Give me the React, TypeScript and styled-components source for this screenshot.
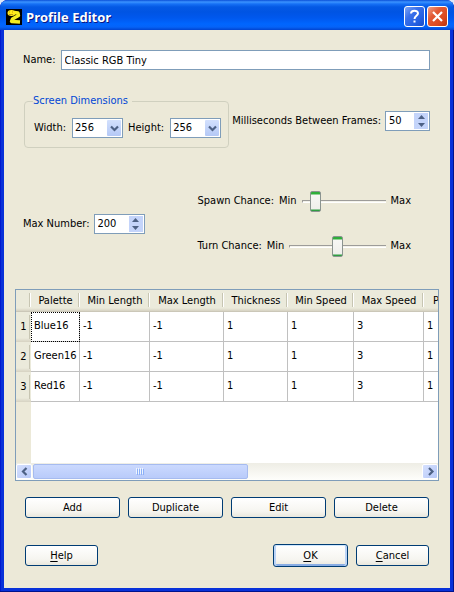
import React, { useRef, useState } from "react";
import styled, { createGlobalStyle, css } from "styled-components";

const GlobalStyle = createGlobalStyle`
  *, *::before, *::after { box-sizing: border-box; }
  body { margin: 0; background: #dfe9f8; }
  body, button, input, select, table {
    font-family: "DejaVu Sans Condensed", "DejaVu Sans", sans-serif;
    font-size: 11px;
    line-height: 14px;
    color: #000;
  }
  u { text-underline-offset: 2px; }
`;

const Window = styled.main`
  display: flex;
  flex-direction: column;
  min-height: 100vh;
  border-radius: 8px 8px 0 0;
  background: #0831d9;
  box-shadow: inset -1px -1px #00138c, inset 1px 0 #0019cf;
  overflow: hidden;
`;

const TitleBar = styled.header`
  display: flex;
  align-items: center;
  gap: 4px;
  height: 30px;
  padding: 3px 6px 0;
  background: linear-gradient(
    #0a50d8 0px, #3b93ff 2px, #1670f5 4px, #0459e4 7px, #0054e3 12px,
    #0058ee 18px, #0066ff 24px, #0563f8 27px, #0144d0 30px
  );
`;

const Title = styled.h1`
  flex: 1;
  margin: 0;
  font: bold 13px/18px "Open Sans", "Noto Sans", sans-serif;
  color: #fff;
  text-shadow: 1px 1px 0 #0a1883;
`;

const CaptionButtons = styled.div`
  display: flex;
  gap: 2px;
`;

const CaptionButton = styled.button<{ $close?: boolean }>`
  display: grid;
  place-items: center;
  width: 21px;
  height: 21px;
  padding: 0;
  border: 1px solid #fff;
  border-radius: 3px;
  background: ${({ $close }) =>
    $close
      ? "linear-gradient(135deg, #f0a088 0%, #e25a35 35%, #dc4a20 70%, #b83410 100%)"
      : "linear-gradient(135deg, #7ea6f5 0%, #3b71ea 35%, #2460e2 70%, #1a4cc8 100%)"};
`;

const Body = styled.form`
  flex: 1;
  margin: 0 4px 4px;
  padding: 20px 11px 21px;
  background: #ece9d8;
`;

const NameRow = styled.div`
  display: flex;
  align-items: center;
  gap: 5px;
  padding: 0 9px 0 8px;
`;

const TextField = styled.input`
  flex: 1;
  min-width: 0;
  height: 20px;
  padding: 0 3px;
  border: 1px solid #7f9db9;
  border-radius: 0;
  background: #fff;
  outline: none;
`;

const ScreenRow = styled.div`
  display: flex;
  align-items: center;
  gap: 3px;
  margin-top: 24px;
  padding: 0 9px;
`;

const Group = styled.fieldset`
  display: flex;
  flex: 1;
  gap: 5px;
  min-width: 0;
  margin: 0;
  padding: 10px 9px 9px;
  border: 1px solid #d0d0bf;
  border-radius: 4px;
`;

const GroupTitle = styled.legend`
  padding: 0 4px 0 0;
  margin-left: -1px;
  color: #0046d5;
`;

const Field = styled.div<{ $gap: number }>`
  display: flex;
  align-items: center;
  gap: ${({ $gap }) => $gap}px;
  white-space: nowrap;
`;

const SelectBox = styled.span`
  position: relative;
  display: flex;
`;

const Select = styled.select`
  width: 51px;
  height: 20px;
  padding: 0 18px 0 2px;
  border: 1px solid #7f9db9;
  border-radius: 0;
  background: #fff;
  appearance: none;
  outline: none;
`;

const SelectArrow = styled.span`
  position: absolute;
  top: 2px;
  right: 2px;
  display: grid;
  place-items: center;
  width: 14px;
  height: 16px;
  border-radius: 1px;
  background: linear-gradient(#d3e0fd, #b4c8f6);
  pointer-events: none;
`;

const SpinFrame = styled.span<{ $wide?: boolean }>`
  display: flex;
  width: ${({ $wide }) => ($wide ? "51px" : "45px")};
  height: 20px;
  padding: 1px;
  border: 1px solid #7f9db9;
  background: #fff;
`;

const SpinInput = styled.input`
  flex: 1;
  min-width: 0;
  padding: 0 2px;
  border: 0;
  background: transparent;
  outline: none;
`;

const SpinButtons = styled.span`
  display: flex;
  flex-direction: column;
  width: 14px;
`;

const SpinButton = styled.button`
  display: grid;
  place-items: center;
  flex: 1;
  min-height: 0;
  padding: 0;
  border: 0;
  background: #c4d4fa;
`;

const ChanceRow = styled.div`
  display: flex;
  align-items: center;
  gap: 53px;
  margin-top: 42px;
  padding: 0 28px 0 8px;
`;

const Chances = styled.div`
  display: flex;
  flex: 1;
  flex-direction: column;
  gap: 23px;
  min-width: 0;
`;

const Chance = styled.div`
  display: flex;
  align-items: center;
  gap: 5px;
  height: 22px;
  white-space: nowrap;
`;

const Slider = styled.input`
  flex: 1;
  min-width: 0;
  height: 21px;
  margin: 0;
  appearance: none;
  background: transparent;

  &::-webkit-slider-runnable-track {
    height: 3px;
    border-top: 1px solid #9d9c99;
    border-left: 1px solid #9d9c99;
    border-bottom: 1px solid #fff;
    background: #f3f2ea;
  }

  &::-webkit-slider-thumb {
    appearance: none;
    width: 11px;
    height: 21px;
    margin-top: -10px;
    border: 1px solid #8b9490;
    border-radius: 2px;
    background: linear-gradient(#2fae3a 0 2px, #f7f7f4 3px, #efefeb 17px, #2f9e42 18px);
  }
`;

const TableFrame = styled.section`
  margin-top: 32px;
  border: 1px solid #7f9db9;
  background: #fff;
`;

const TableView = styled.div`
  height: 173px;
  overflow: hidden;
  background: linear-gradient(90deg, #ece9d8 15px, #fff 15px);
`;

const Grid = styled.table`
  width: 478px;
  table-layout: fixed;
  border-collapse: separate;
  border-spacing: 0;
`;

const headerFace = css`
  padding: 0;
  font-weight: normal;
  text-align: center;
  background: #ebeadb;
`;

const ColumnHeader = styled.th`
  ${headerFace}
  height: 22px;
  border-bottom: 1px solid #cbc7b8;
  background:
    linear-gradient(#c7c5b2, #c7c5b2) right 1px top 3px / 1px 14px no-repeat,
    linear-gradient(#fff, #fff) right top 3px / 1px 14px no-repeat,
    linear-gradient(#ebeadb 18px, #d6d2c2);
`;

const RowHeader = styled.th`
  ${headerFace}
  height: 30px;
  background:
    linear-gradient(#c7c5b2, #c7c5b2) right 1px top 3px / 1px 24px no-repeat,
    linear-gradient(#ebeadb 26px, #d6d2c2);
`;

const Cell = styled.td<{ $focused?: boolean }>`
  height: 30px;
  padding: 0 0 1px 3px;
  border-right: 1px solid #c0c0c0;
  border-bottom: 1px solid #c0c0c0;
  ${({ $focused }) =>
    $focused &&
    css`
      outline: 1px dotted #000;
      outline-offset: -1px;
    `}
`;

const ScrollBar = styled.div`
  display: flex;
  height: 17px;
  padding: 1px 0;
  background: linear-gradient(#eeede5, #fefefb);
`;

const ScrollButton = styled.button`
  display: grid;
  place-items: center;
  width: 16px;
  padding: 0;
  border: 1px solid #fff;
  border-radius: 2px;
  background: linear-gradient(135deg, #d5e0fe, #b6c8f8);
`;

const ScrollTrack = styled.div`
  flex: 1;
`;

const ScrollThumb = styled.div`
  display: grid;
  place-items: center;
  width: 55%;
  height: 15px;
  margin-left: 1px;
  border: 1px solid #a6bbef;
  border-radius: 2px;
  background: linear-gradient(#cbd9fe, #b9cbfa);
`;

const Actions = styled.div`
  display: grid;
  grid-template-columns: repeat(4, 1fr);
  gap: 8px;
  margin-top: 16px;
  padding: 0 10px;
`;

const Footer = styled.footer`
  display: flex;
  align-items: center;
  gap: 8px;
  margin-top: 26px;
  padding: 0 10px;
`;

const Spacer = styled.span`
  flex: 1;
`;

const Button = styled.button<{ $kind?: "dialog" | "default" }>`
  width: ${({ $kind }) => ($kind === "default" ? "75px" : $kind === "dialog" ? "73px" : "100%")};
  height: ${({ $kind }) => ($kind === "default" ? "23px" : "21px")};
  padding: 0;
  border: 1px solid #003c74;
  border-radius: 3px;
  background: linear-gradient(#fff, #f6f5f0 70%, #e9e7dd);
  ${({ $kind }) =>
    $kind === "default" &&
    css`
      box-shadow: inset 0 1px #cee7ff, inset 2px 0 #bcd4f6, inset -2px 0 #bcd4f6, inset 0 -2px #89ade4;
    `}
`;

const Chevron = ({ dir }: { dir: "down" | "left" | "right" }) => {
  const paths = {
    down: "M1 2.5 L4.5 6 L8 2.5",
    left: "M6.5 1 L3 4.5 L6.5 8",
    right: "M3 1 L6.5 4.5 L3 8",
  };
  return (
    <svg width="9" height="9" viewBox="0 0 9 9" aria-hidden="true">
      <path d={paths[dir]} fill="none" stroke="#4d6185" strokeWidth="2.2" />
    </svg>
  );
};

const SizeSelect = ({ id, label }: { id: string; label: string }) => (
  <Field $gap={6}>
    <label htmlFor={id}>{label}</label>
    <SelectBox>
      <Select id={id} defaultValue="256">
        <option>128</option>
        <option>256</option>
        <option>512</option>
      </Select>
      <SelectArrow><Chevron dir="down" /></SelectArrow>
    </SelectBox>
  </Field>
);

const SpinField = ({ id, label, initial, wide }: { id: string; label: string; initial: number; wide?: boolean }) => {
  const [value, setValue] = useState(initial);
  return (
    <Field $gap={4}>
      <label htmlFor={id}>{label}</label>
      <SpinFrame $wide={wide}>
        <SpinInput id={id} inputMode="numeric" value={value} onChange={(e) => setValue(Number(e.target.value) || 0)} />
        <SpinButtons>
          <SpinButton type="button" aria-label="Increase" onClick={() => setValue(value + 1)}>
            <svg width="7" height="4" viewBox="0 0 7 4"><path d="M0 4 L3.5 0 L7 4Z" fill="#4d6185" /></svg>
          </SpinButton>
          <SpinButton type="button" aria-label="Decrease" onClick={() => setValue(value - 1)}>
            <svg width="7" height="4" viewBox="0 0 7 4"><path d="M0 0 L3.5 4 L7 0Z" fill="#4d6185" /></svg>
          </SpinButton>
        </SpinButtons>
      </SpinFrame>
    </Field>
  );
};

const ChanceSlider = ({ id, label, initial }: { id: string; label: string; initial: number }) => (
  <Chance>
    <label htmlFor={id}>{label}</label>
    <span>Min</span>
    <Slider id={id} type="range" min="0" max="100" defaultValue={initial} />
    <span>Max</span>
  </Chance>
);

const columns = [
  { name: "Palette", width: 49 },
  { name: "Min Length", width: 70 },
  { name: "Max Length", width: 74 },
  { name: "Thickness", width: 64 },
  { name: "Min Speed", width: 66 },
  { name: "Max Speed", width: 70 },
  { name: "Post Delay", width: 70 },
];

const rows = [
  ["Blue16", "-1", "-1", "1", "1", "3", "1"],
  ["Green16", "-1", "-1", "1", "1", "3", "1"],
  ["Red16", "-1", "-1", "1", "1", "3", "1"],
];

const App = () => {
  const view = useRef<HTMLDivElement>(null);
  const scroll = (by: number) => view.current?.scrollBy({ left: by });

  return (
    <>
      <GlobalStyle />
      <Window>
        <TitleBar>
          <svg width="16" height="16" viewBox="0 0 16 16" aria-hidden="true">
            <rect width="16" height="16" fill="#000" />
            <path d="M8 3.5 L12 4 L12.5 6.5 L6.5 10 L5.5 12.5 L14 13" fill="none" stroke="#f4ec20" strokeWidth="3.4" strokeLinejoin="round" />
            <ellipse cx="5.5" cy="4" rx="4" ry="3" fill="#ffe91a" />
            <path d="M3 3h1M6 3h1M3 5.5h4" stroke="#c09a10" />
          </svg>
          <Title>Profile Editor</Title>
          <CaptionButtons>
            <CaptionButton type="button" aria-label="Help">
              <svg width="13" height="15" viewBox="0 0 13 15">
                <path d="M3 4.5 C3 0.8 10 0.8 10 4.3 C10 6.8 6.5 6.8 6.5 10" fill="none" stroke="#fff" strokeWidth="2" />
                <rect x="5.5" y="11.5" width="2" height="2" fill="#fff" />
              </svg>
            </CaptionButton>
            <CaptionButton type="button" aria-label="Close" $close>
              <svg width="13" height="13" viewBox="0 0 13 13">
                <path d="M2 2 L11 11 M11 2 L2 11" stroke="#fff" strokeWidth="2.2" />
              </svg>
            </CaptionButton>
          </CaptionButtons>
        </TitleBar>

        <Body onSubmit={(e) => e.preventDefault()}>
          <NameRow>
            <label htmlFor="name">Name:</label>
            <TextField id="name" defaultValue="Classic RGB Tiny" />
          </NameRow>

          <ScreenRow>
            <Group>
              <GroupTitle>Screen Dimensions</GroupTitle>
              <SizeSelect id="width" label="Width:" />
              <SizeSelect id="height" label="Height:" />
            </Group>
            <SpinField id="delay" label="Milliseconds Between Frames:" initial={50} />
          </ScreenRow>

          <ChanceRow>
            <SpinField id="max-number" label="Max Number:" initial={200} wide />
            <Chances>
              <ChanceSlider id="spawn" label="Spawn Chance:" initial={10} />
              <ChanceSlider id="turn" label="Turn Chance:" initial={50} />
            </Chances>
          </ChanceRow>

          <TableFrame>
            <TableView ref={view}>
              <Grid>
                <colgroup>
                  <col width={15} />
                  {columns.map((c) => <col key={c.name} width={c.width} />)}
                </colgroup>
                <thead>
                  <tr>
                    <ColumnHeader />
                    {columns.map((c) => <ColumnHeader key={c.name} scope="col">{c.name}</ColumnHeader>)}
                  </tr>
                </thead>
                <tbody>
                  {rows.map((row, r) => (
                    <tr key={row[0]}>
                      <RowHeader scope="row">{r + 1}</RowHeader>
                      {row.map((text, c) => (
                        <Cell key={c} $focused={r === 0 && c === 0}>{text}</Cell>
                      ))}
                    </tr>
                  ))}
                </tbody>
              </Grid>
            </TableView>
            <ScrollBar>
              <ScrollButton type="button" aria-label="Scroll left" onClick={() => scroll(-20)}><Chevron dir="left" /></ScrollButton>
              <ScrollTrack>
                <ScrollThumb>
                  <svg width="8" height="7" viewBox="0 0 8 7" aria-hidden="true">
                    <path d="M.5 0v6M2.5 0v6M4.5 0v6M6.5 0v6" stroke="#eef4fe" />
                    <path d="M1.5 1v6M3.5 1v6M5.5 1v6M7.5 1v6" stroke="#8cb0f8" />
                  </svg>
                </ScrollThumb>
              </ScrollTrack>
              <ScrollButton type="button" aria-label="Scroll right" onClick={() => scroll(20)}><Chevron dir="right" /></ScrollButton>
            </ScrollBar>
          </TableFrame>

          <Actions>
            <Button type="button">Add</Button>
            <Button type="button">Duplicate</Button>
            <Button type="button">Edit</Button>
            <Button type="button">Delete</Button>
          </Actions>

          <Footer>
            <Button type="button" $kind="dialog"><u>H</u>elp</Button>
            <Spacer />
            <Button type="submit" $kind="default"><u>O</u>K</Button>
            <Button type="button" $kind="dialog"><u>C</u>ancel</Button>
          </Footer>
        </Body>
      </Window>
    </>
  );
};

export default App;
